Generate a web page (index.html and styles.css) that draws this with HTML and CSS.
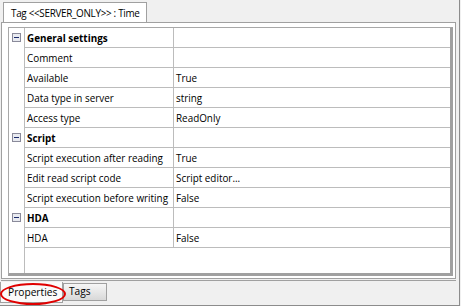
FILE: index.html
```html
<!DOCTYPE html>
<html lang="en">
<head>
    <meta charset="UTF-8">
    <title>Tag properties</title>
    <link rel="stylesheet" href="styles.css">
</head>
<body>

<div class="window">
    <!-- 상단 탭 -->
    <div class="top-tabs">
        <div class="doc-tab">Tag &lt;&lt;SERVER_ONLY&gt;&gt; : Time</div>
    </div>

    <!-- 속성 그리드 -->
    <div class="panel">
        <div class="grid">
            <div class="row category">
                <div class="gutter"><span class="toggle"></span></div>
                <div class="name">General settings</div>
                <div class="value"></div>
            </div>
            <div class="row">
                <div class="gutter"></div>
                <div class="name">Comment</div>
                <div class="value"></div>
            </div>
            <div class="row">
                <div class="gutter"></div>
                <div class="name">Available</div>
                <div class="value">True</div>
            </div>
            <div class="row">
                <div class="gutter"></div>
                <div class="name">Data type in server</div>
                <div class="value">string</div>
            </div>
            <div class="row">
                <div class="gutter"></div>
                <div class="name">Access type</div>
                <div class="value">ReadOnly</div>
            </div>
            <div class="row category">
                <div class="gutter"><span class="toggle"></span></div>
                <div class="name">Script</div>
                <div class="value"></div>
            </div>
            <div class="row">
                <div class="gutter"></div>
                <div class="name">Script execution after reading</div>
                <div class="value">True</div>
            </div>
            <div class="row">
                <div class="gutter"></div>
                <div class="name">Edit read script code</div>
                <div class="value">Script editor...</div>
            </div>
            <div class="row">
                <div class="gutter"></div>
                <div class="name">Script execution before writing</div>
                <div class="value">False</div>
            </div>
            <div class="row category">
                <div class="gutter"><span class="toggle"></span></div>
                <div class="name">HDA</div>
                <div class="value"></div>
            </div>
            <div class="row">
                <div class="gutter"></div>
                <div class="name">HDA</div>
                <div class="value">False</div>
            </div>
            <div class="filler"><div class="gutter"></div></div>
        </div>
    </div>

    <!-- 하단 탭 -->
    <div class="bottom-tabs">
        <div class="btab active">Properties</div>
        <div class="btab">Tags</div>
        <div class="mark"></div>
    </div>
</div>

</body>
</html>
```

FILE: styles.css
```css
body {
    margin: 0;
    background: #f0f0f0;
    font-family: 'Open Sans', 'Noto Sans', sans-serif;
    font-size: 9.9px;
    color: #000;
}

.window {
    width: 459px;
    height: 305px;
    border-right: 1px solid #8c8c8c;
    border-bottom: 1px solid #8c8c8c;
    position: relative;
}

.top-tabs {
    height: 22px;
    padding-top: 2px;
    padding-left: 3px;
    box-sizing: border-box;
    display: flex;
}

.doc-tab {
    width: 128px;
    background: #fff;
    border: 1px solid #a0a0a0;
    border-bottom: none;
    padding: 0 7px;
    line-height: 20px;
    font-size: 9.9px;
    letter-spacing: -0.3px;
    white-space: nowrap;
}

.panel {
    width: 455px;
    margin-left: 1px;
    height: 257px;
    box-sizing: border-box;
    border: 1px solid #a0a0a0;
    background: #fff;
    padding: 4px 2px 2px 6px;
    box-shadow: 0 1px 0 #f0f0f0, 0 2px 0 #a0a0a0;
}

.grid {
    height: 249px;
    box-sizing: border-box;
    border: 1px solid #a8a8a8;
    border-right: 3px solid #a0a0a0;
    border-bottom: 3px solid #a0a0a0;
    display: flex;
    flex-direction: column;
}

.row {
    display: grid;
    grid-template-columns: 16px 149px 1fr;
    height: 20px;
}

.gutter {
    border-right: 1px solid #bcbcbc;
    position: relative;
}

.name, .value {
    border-bottom: 1px solid #bcbcbc;
    line-height: 20px;
    padding-left: 2px;
    white-space: nowrap;
    overflow: hidden;
}

.name {
    border-right: 1px solid #bcbcbc;
}

.category .name {
    font-weight: bold;
}

.toggle {
    position: absolute;
    left: 3px;
    top: 5px;
    width: 7px;
    height: 7px;
    border: 1px solid #8a8a9a;
    background: #e8eaf0;
}

.toggle::after {
    content: "";
    position: absolute;
    left: 1px;
    top: 3px;
    width: 5px;
    height: 1px;
    background: #1c2a6a;
}

.filler {
    flex: 1;
    display: grid;
    grid-template-columns: 16px 1fr;
}

.bottom-tabs {
    margin-top: 3px;
    display: flex;
    align-items: flex-start;
    position: relative;
}

.btab {
    box-sizing: border-box;
    border: 1px solid #a0a0a0;
    border-top: none;
    white-space: nowrap;
    font-size: 10.2px;
}

.btab.active {
    background: #fafafa;
    height: 21px;
    line-height: 21px;
    width: 63px;
    padding-left: 7px;
}

.btab + .btab {
    margin-top: 1px;
    height: 18px;
    line-height: 15px;
    width: 44px;
    padding-left: 5px;
    border-top: 1px solid #a0a0a0;
    background: linear-gradient(#f6f6f6, #d8d8d8);
}

.mark {
    position: absolute;
    left: 0;
    top: 1px;
    width: 62px;
    height: 18px;
    border: 2px solid #e00000;
    border-radius: 50%;
}
```
